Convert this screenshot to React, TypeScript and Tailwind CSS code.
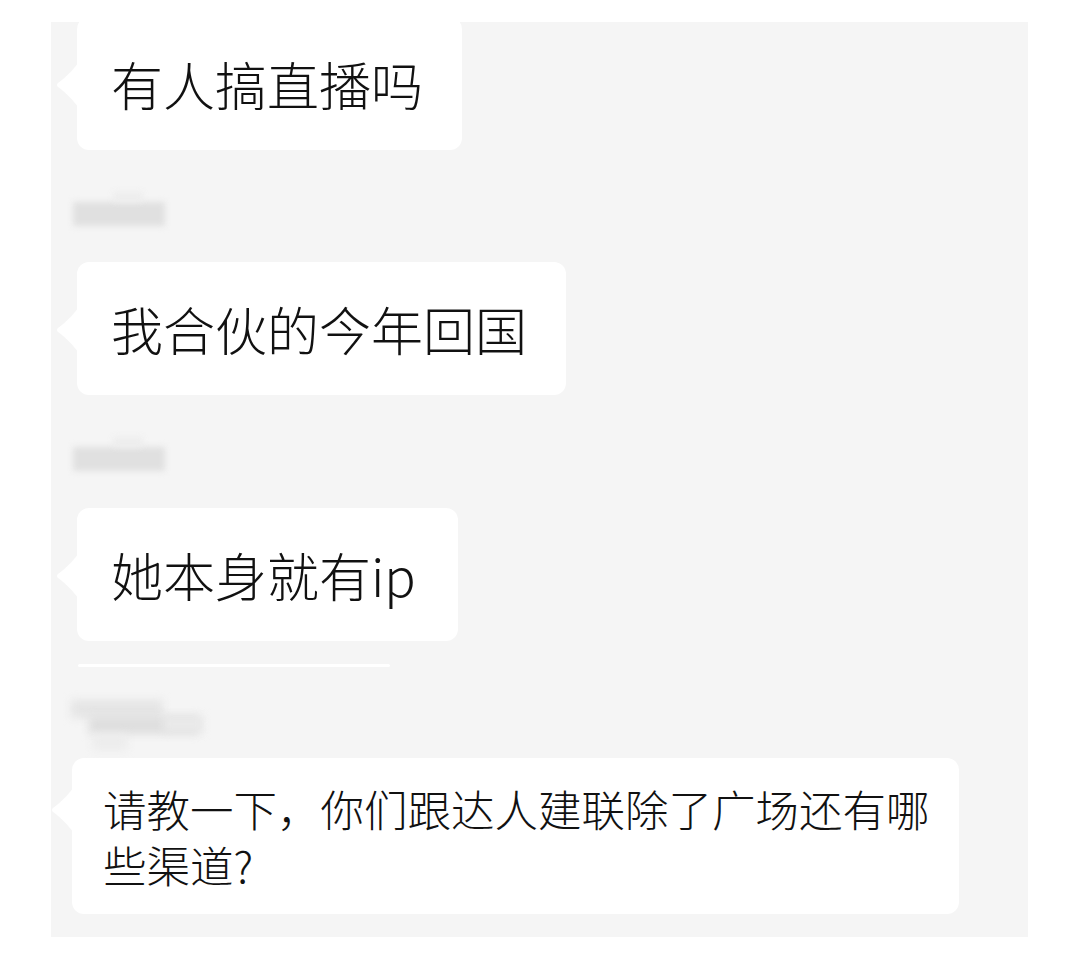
import React from "react";

const font = { fontFamily: '"Noto Sans CJK SC", "Noto Sans", sans-serif' };

function Tail({ top }: { top: string }) {
  return (
    <svg
      className={`absolute left-[-21px] ${top}`}
      width="22"
      height="44"
      viewBox="0 0 22 44"
    >
      <path d="M22 0 C18 6 8 16 2 20 Q0 22 2 24 C8 28 18 38 22 44 Z" fill="#ffffff" />
    </svg>
  );
}

function Bubble({
  text,
  width,
}: {
  text: string;
  width: string;
}) {
  return (
    <div
      className={`relative ml-[26px] flex h-[133px] ${width} items-center rounded-[12px] bg-white pl-[34px] text-[52px] font-light leading-none text-[#111111]`}
      style={font}
    >
      <Tail top="top-[46px]" />
      <span>{text}</span>
    </div>
  );
}

function BlurName() {
  return (
    <div className="relative ml-[22px] h-[28px] w-[92px]">
      <div className="absolute left-0 top-[2px] h-[24px] w-[92px] bg-[#e0e0e0] blur-[3px]" />
      <div className="absolute left-[40px] top-[-8px] h-[10px] w-[30px] bg-[#ededed] blur-[3px]" />
    </div>
  );
}

export default function App() {
  return (
    <div className="h-[968px] w-[1080px] bg-white pt-[22px]">
      <div className="ml-[51px] flex h-[915px] w-[977px] flex-col overflow-hidden bg-[#f5f5f5]">
        <div className="mt-[-5px]">
          <Bubble text="有人搞直播吗" width="w-[385px]" />
        </div>
        <div className="mt-[50px]">
          <BlurName />
        </div>
        <div className="mt-[34px]">
          <Bubble text="我合伙的今年回国" width="w-[489px]" />
        </div>
        <div className="mt-[50px]">
          <BlurName />
        </div>
        <div className="mt-[35px]">
          <Bubble text="她本身就有ip" width="w-[381px]" />
        </div>
        <div className="ml-[27px] mt-[23px] h-[3px] w-[312px] rounded-full bg-white" />
        <div className="relative ml-[20px] mt-[33px] h-[58px] w-[140px]">
          <div className="absolute left-0 top-[0px] h-[18px] w-[92px] bg-[#e5e5e5] blur-[4px]" />
          <div className="absolute left-[18px] top-[16px] h-[18px] w-[110px] bg-[#dedede] blur-[4px]" />
          <div className="absolute left-[92px] top-[16px] h-[16px] w-[40px] bg-[#eaeaea] blur-[4px]" />
          <div className="absolute left-[22px] top-[34px] h-[16px] w-[34px] bg-[#ececec] blur-[4px]" />
        </div>
        <div
          className="relative ml-[21px] mt-[0px] w-[887px] rounded-[12px] bg-white pb-[21px] pl-[31px] pr-[16px] pt-[23px] text-[43.5px] font-light leading-[56px] text-[#111111]"
          style={font}
        >
          <Tail top="top-[30px]" />
          请教一下，你们跟达人建联除了广场还有哪些渠道?
        </div>
      </div>
    </div>
  );
}
